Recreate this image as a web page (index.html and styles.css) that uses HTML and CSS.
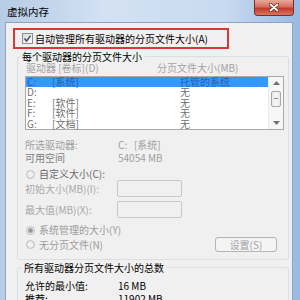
FILE: index.html
```html
<!DOCTYPE html>
<html lang="zh-CN">
<head>
    <meta charset="utf-8">
    <title>虚拟内存</title>
    <link rel="stylesheet" href="styles.css">
</head>
<body>
    <div class="window">
        <div class="titlebar">
            <span class="title">虚拟内存</span>
            <div class="close">
                <svg width="10" height="9" viewBox="0 0 10 9">
                    <path d="M1.5 1.5 L8.5 7.5 M8.5 1.5 L1.5 7.5" stroke="#6b2424" stroke-width="3.4" stroke-linecap="round"/>
                    <path d="M1.5 1.5 L8.5 7.5 M8.5 1.5 L1.5 7.5" stroke="#fff" stroke-width="1.8" stroke-linecap="round"/>
                </svg>
            </div>
        </div>
        <div class="client">
            <label class="auto">
                <span class="check">
                    <svg width="9" height="9" viewBox="0 0 9 9">
                        <path d="M1.5 4.5 L3.6 7 L7.6 1.6" stroke="#3b4c7c" stroke-width="1.5" fill="none"/>
                    </svg>
                </span>
                自动管理所有驱动器的分页文件大小(A)
            </label>
            <fieldset class="group">
                <legend>每个驱动器的分页文件大小</legend>
                <div class="list-head">
                    <span class="col-drive">驱动器 [卷标](D)</span>
                    <span>分页文件大小(MB)</span>
                </div>
                <div class="list">
                    <div class="rows">
                        <div class="row selected"><span class="c1">C:</span><span class="c2">[系统]</span><span>托管的系统</span></div>
                        <div class="row"><span class="c1">D:</span><span class="c2"></span><span>无</span></div>
                        <div class="row"><span class="c1">E:</span><span class="c2">[软件]</span><span>无</span></div>
                        <div class="row"><span class="c1">F:</span><span class="c2">[软件]</span><span>无</span></div>
                        <div class="row"><span class="c1">G:</span><span class="c2">[文档]</span><span>无</span></div>
                    </div>
                    <div class="scrollbar">
                        <span class="arrow"><svg width="7" height="4" viewBox="0 0 7 4"><path d="M0 4 L3.5 0 L7 4 Z" fill="#707070"/></svg></span>
                        <span class="thumb"></span>
                        <span class="arrow"><svg width="7" height="4" viewBox="0 0 7 4"><path d="M0 0 L3.5 4 L7 0 Z" fill="#707070"/></svg></span>
                    </div>
                </div>
                <div class="info">
                    <div class="pair"><span class="key">所选驱动器:</span><span>C:&nbsp;&nbsp;&nbsp;[系统]</span></div>
                    <div class="pair space"><span class="key">可用空间</span><span>54054 MB</span></div>
                </div>
                <div class="option custom"><span class="radio"></span>自定义大小(C):</div>
                <div class="field"><span class="key">初始大小(MB)(I):</span><span class="input"></span></div>
                <div class="field second"><span class="key">最大值(MB)(X):</span><span class="input"></span></div>
                <div class="option managed"><span class="radio on"></span>系统管理的大小(Y)</div>
                <div class="last-row">
                    <div class="option"><span class="radio"></span>无分页文件(N)</div>
                    <span class="button">设置(S)</span>
                </div>
            </fieldset>
            <fieldset class="group total">
                <legend>所有驱动器分页文件大小的总数</legend>
                <div class="pair"><span class="key">允许的最小值:</span><span>16 MB</span></div>
                <div class="pair"><span class="key">推荐:</span><span>11902 MB</span></div>
            </fieldset>
        </div>
    </div>
</body>
</html>
```

FILE: styles.css
```css
body {
    margin: 0;
    font-family: "Noto Sans CJK SC", sans-serif;
    font-size: 10px;
    color: #000;
}
.window {
    width: 300px;
    height: 300px;
    overflow: hidden;
    display: flex;
    flex-direction: column;
    background: linear-gradient(to right, #b6cbe5, #d3e1f3 35%, #c8daf0 75%, #98b9e2);
}
.titlebar {
    height: 22px;
    flex: none;
    display: flex;
    justify-content: space-between;
    padding-left: 7px;
}
.title {
    font-size: 10.5px;
    line-height: 23px;
}
.close {
    width: 40px;
    height: 16px;
    margin-right: 6px;
    box-sizing: border-box;
    border: 1px solid #7a2c2c;
    border-top: none;
    border-radius: 0 0 4px 4px;
    background: linear-gradient(#e9a899, #d6705f 45%, #c23b2b 55%, #d9765f);
    display: flex;
    align-items: center;
    justify-content: center;
}
.client {
    flex: 1;
    margin-left: 5px;
    width: 288px;
    box-sizing: border-box;
    background: #f0f0f0;
    border: 1px solid #8fa3bf;
    border-bottom: none;
}
.auto {
    display: flex;
    align-items: center;
    margin: 5px 0 0 7px;
    width: 216px;
    height: 21px;
    box-sizing: border-box;
    border: 2px solid #d7393b;
    padding-left: 7px;
    line-height: 12px;
}
.check {
    width: 11px;
    height: 11px;
    box-sizing: border-box;
    border: 1px solid #8e8f8f;
    background: linear-gradient(135deg, #d8d8d8, #fff);
    margin-right: 2px;
    display: flex;
    align-items: center;
    justify-content: center;
}
.group {
    margin: 2px 0 0 11px;
    width: 272px;
    box-sizing: border-box;
    border: 1px solid #d5dfe5;
    border-radius: 3px;
    padding: 0 4px 7px 7px;
    min-width: 0;
}
.group legend {
    line-height: 11px;
    padding: 0 2px;
    margin-left: -5px;
}
.list-head {
    display: flex;
    height: 11px;
    line-height: 11px;
    padding-left: 1px;
    color: #a3a3a3;
}
.col-drive {
    width: 131px;
}
.list {
    margin-top: 3px;
    height: 54px;
    box-sizing: border-box;
    border: 1px solid #a9a9a9;
    background: #fff;
    display: flex;
}
.rows {
    flex: 1;
}
.row {
    display: flex;
    height: 10.4px;
    line-height: 10.4px;
    padding-left: 1px;
    color: #707070;
}
.row.selected {
    background: #3399ff;
    color: #2760b4;
}
.c1 {
    width: 25px;
}
.c2 {
    width: 128px;
}
.scrollbar {
    width: 14px;
    border-left: 1px solid #ececec;
    background: #f7f7f7;
    display: flex;
    flex-direction: column;
    align-items: center;
}
.arrow {
    height: 14px;
    display: flex;
    align-items: center;
}
.thumb {
    width: 10px;
    height: 18px;
    margin: 1px 0 9px;
    box-sizing: border-box;
    border: 1px solid #a8a8a8;
    border-radius: 2px;
    background: repeating-linear-gradient(#f4f4f4 0 6px, #8a8a8a 6px 7px, #f4f4f4 7px 8px);
    background-size: 4px 100%;
    background-position: center;
    background-repeat: no-repeat;
    background-color: #ececec;
}
.info {
    margin-top: 8px;
    color: #a0a0a0;
}
.pair {
    display: flex;
    line-height: 13px;
}
.pair .key {
    width: 93px;
}
.space .key {
    color: #7c7c7c;
}
.option {
    display: flex;
    align-items: center;
    height: 12px;
    line-height: 12px;
    color: #9c9c9c;
}
.option.custom {
    margin-top: 4px;
    color: #6a6a6a;
}
.option.managed {
    margin-top: 6px;
}
.radio {
    width: 9px;
    height: 9px;
    box-sizing: border-box;
    border: 1px solid #bcbcbc;
    border-radius: 50%;
    background: radial-gradient(circle, #f6f6f6, #e2e2e2);
    margin: 0 4px 0 1px;
}
.radio.on {
    background: radial-gradient(circle, #9a9a9a 0 2px, #ececec 2.6px);
}
.field {
    display: flex;
    align-items: center;
    height: 17px;
    color: #a8a8a8;
}
.field.second {
    margin-top: 4px;
}
.field .key {
    width: 92px;
}
.input {
    width: 65px;
    height: 17px;
    box-sizing: border-box;
    border: 1px solid #c8c8c8;
    border-radius: 2px;
    background: #f0f0f0;
}
.last-row {
    margin-top: 1px;
    height: 15px;
    display: flex;
    justify-content: space-between;
    align-items: center;
}
.button {
    width: 62px;
    height: 15px;
    margin-right: 7px;
    box-sizing: border-box;
    border: 1px solid #b5b5b5;
    border-radius: 3px;
    background: #f4f4f4;
    color: #a3a3a3;
    text-align: center;
    line-height: 13px;
}
.total {
    padding: 6px 4px 0 7px;
}
.total legend {
    margin-left: -3px;
}
```
